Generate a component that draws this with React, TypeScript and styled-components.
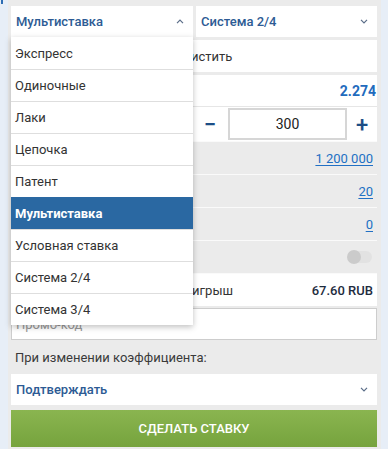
import React from "react";
import styled, {createGlobalStyle, css} from "styled-components";

const GlobalStyle = createGlobalStyle`
	html, body { margin: 0; padding: 0; background: #e7eef7; }
	body { font-family: Roboto, "Liberation Sans", Arial, sans-serif; font-size: 13px; color: #333; }
	* { box-sizing: border-box; }
`

const Page = styled.div`
	display: flex;
	width: 388px;
	height: 449px;
	overflow: hidden;
`
const Edge = styled.div`
	width: 8px;
	flex-shrink: 0;
	padding-left: 1px;
`
const EdgeMark = styled.div`
	width: 2px;
	height: 4px;
	background: #2d6db4;
`
const Panel = styled.div`
	width: 373px;
	background: #ebebeb;
	padding: 6px 4px 0 3px;
	display: flex;
	flex-direction: column;
`
const SelectRow = styled.div`
	display: flex;
	gap: 3px;
	height: 31px;
	margin-bottom: 3px;
`
const SelectWrap = styled.div`
	position: relative;
	width: 182px;
	z-index: 5;
`
const SelectBox = styled.div<{ $grow?: boolean }>`
	display: flex;
	align-items: center;
	justify-content: space-between;
	height: 31px;
	padding: 0 9px 0 5px;
	background: #fff;
	color: #2d5b94;
	font-weight: 500;
	${p => p.$grow && css`flex: 1;`}
`
const Chevron = styled.svg`
	width: 8px;
	height: 5px;
	flex-shrink: 0;
`
const Menu = styled.ul`
	position: absolute;
	left: 0;
	top: 31px;
	width: 182px;
	margin: 0;
	padding: 0;
	list-style: none;
	background: #fff;
	box-shadow: 0 2px 6px rgba(0, 0, 0, 0.25);
`
const MenuItem = styled.li<{ $active?: boolean }>`
	height: 32px;
	display: flex;
	align-items: center;
	padding: 0 4px;
	border-top: 1px solid #dedede;
	color: #333;
	&:first-child { border-top: none; }
	${p => p.$active && css`
		background: #2a68a2;
		color: #fff;
		font-weight: 700;
		border-top-color: #2a68a2;
	`}
`
const ClearRow = styled.div`
	height: 32px;
	margin-bottom: 3px;
	background: #fff;
	display: flex;
	align-items: center;
	padding-left: 164px;
	color: #333;
`
const Line = styled.div<{ $white?: boolean }>`
	display: flex;
	align-items: center;
	justify-content: space-between;
	height: 33px;
	padding: 0 4px;
	background: ${p => (p.$white ? "#fff" : "#ebebeb")};
	border-bottom: 1px solid #fafafa;
`
const Label = styled.span<{ $end?: number }>`
	white-space: nowrap;
	${p => p.$end && css`
		width: ${p.$end}px;
		text-align: right;
		direction: rtl;
		overflow: hidden;
	`}
`
const CoefLine = styled(Line)`
	height: 32px;
	padding-right: 1px;
	border-bottom-color: #e6e6e6;
`
const Coef = styled.span`
	color: #1f6bbd;
	font-size: 14px;
	font-weight: 700;
`
const StakeLine = styled(Line)`
	height: 35px;
	padding: 0;
	padding-left: 4px;
`
const Stepper = styled.div`
	display: flex;
	align-items: center;
	height: 100%;
`
const StepButton = styled.div<{ $w: number }>`
	width: ${p => p.$w}px;
	height: 100%;
	display: flex;
	align-items: center;
	justify-content: center;
	color: #1d4e86;
	font-size: 22px;
	font-weight: 500;
`
const StakeInput = styled.div`
	width: 119px;
	height: 32px;
	border: 2px solid #d6d6d6;
	display: flex;
	align-items: center;
	justify-content: center;
	color: #222;
	font-size: 14px;
`
const Link = styled.a`
	color: #2170c4;
	text-decoration: underline;
	text-underline-offset: 2px;
`
const Toggle = styled.div`
	width: 24px;
	height: 12px;
	border-radius: 6px;
	background: #e2e2e2;
	position: relative;
	margin-right: 1px;
	&::before {
		content: "";
		position: absolute;
		left: -1px;
		top: -1px;
		width: 14px;
		height: 14px;
		border-radius: 50%;
		background: #cbcbcb;
	}
`
const WinLine = styled(Line)`
	height: 32px;
	border-bottom: none;
	margin-bottom: 2px;
`
const Amount = styled.span`
	color: #1e2c3e;
	font-weight: 500;
`
const Promo = styled.div`
	height: 32px;
	border: 1px solid #cdcdcd;
	background: #fff;
	display: flex;
	align-items: center;
	padding: 0 4px;
	color: #999;
`
const Caption = styled.div`
	height: 34px;
	display: flex;
	align-items: center;
	padding: 0 4px;
	color: #3a3a3a;
`
const Submit = styled.button`
	margin-top: 5px;
	height: 37px;
	border: none;
	background: linear-gradient(#8ab550, #76a33d);
	color: #fff;
	font-family: inherit;
	font-size: 13px;
	font-weight: 500;
	text-transform: uppercase;
`

const ChevronIcon = ({up}: { up?: boolean }) => (
	<Chevron viewBox="0 0 8 5">
		<path d={up ? "M1 4.2 L4 1.2 L7 4.2" : "M1 0.8 L4 3.8 L7 0.8"} fill="none" stroke="#5a6d88" strokeWidth="1.2" />
	</Chevron>
);

const types = ["Экспресс", "Одиночные", "Лаки", "Цепочка", "Патент", "Мультиставка", "Условная ставка", "Система 2/4", "Система 3/4"];

const App = () => {
	return (
		<Page>
			<GlobalStyle />
			<Edge><EdgeMark /></Edge>
			<Panel>
				<SelectRow>
					<SelectWrap>
						<SelectBox>Мультиставка <ChevronIcon up /></SelectBox>
						<Menu>
							{types.map(t => <MenuItem key={t} $active={t === "Мультиставка"}>{t}</MenuItem>)}
						</Menu>
					</SelectWrap>
					<SelectBox $grow>Система 2/4 <ChevronIcon /></SelectBox>
				</SelectRow>
				<ClearRow>Очистить</ClearRow>
				<CoefLine $white>
					<Label>Общий коэффициент</Label>
					<Coef>2.274</Coef>
				</CoefLine>
				<StakeLine $white>
					<Label>Сумма ставки</Label>
					<Stepper>
						<StepButton $w={36}>−</StepButton>
						<StakeInput>300</StakeInput>
						<StepButton $w={30}>+</StepButton>
					</Stepper>
				</StakeLine>
				<Line><Label>Количество вариантов</Label><Link>1 200 000</Link></Line>
				<Line><Label>Ставок</Label><Link>20</Link></Line>
				<Line><Label>Выигрышных</Label><Link>0</Link></Line>
				<Line><Label>Автоставка</Label><Toggle /></Line>
				<WinLine $white>
					<Label $end={218}>Возможный выигрыш</Label>
					<Amount>67.60 RUB</Amount>
				</WinLine>
				<Promo>Промо-код</Promo>
				<Caption>При изменении коэффициента:</Caption>
				<SelectBox>Подтверждать <ChevronIcon /></SelectBox>
				<Submit>Сделать ставку</Submit>
			</Panel>
		</Page>
	);
};

export default App;
